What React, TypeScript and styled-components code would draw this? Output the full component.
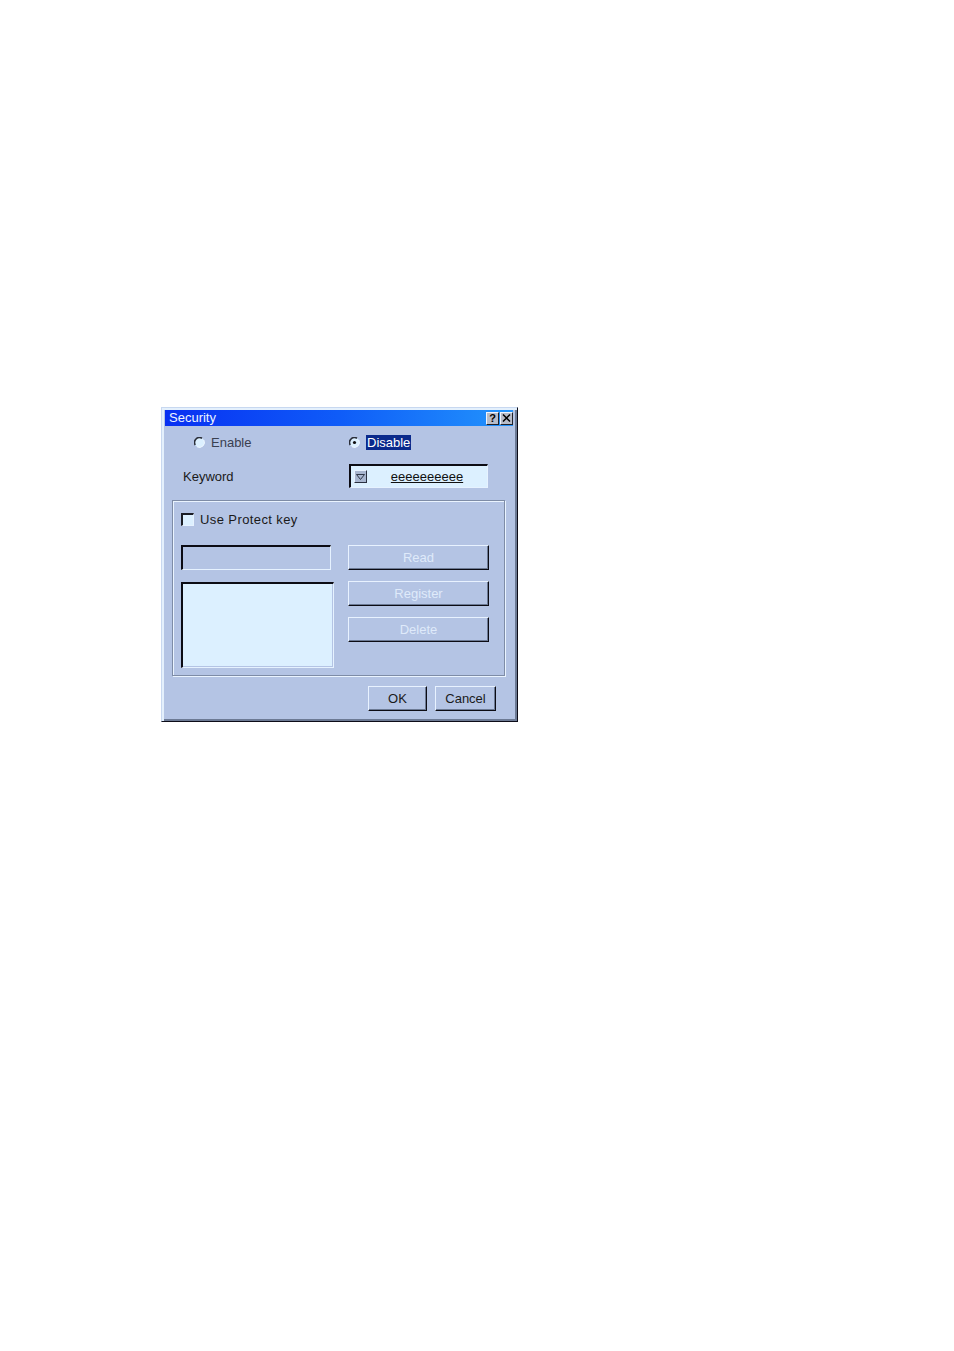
import styled, { createGlobalStyle } from "styled-components";

const GlobalStyle = createGlobalStyle`
  html, body {
    margin: 0;
    padding: 0;
    background: #ffffff;
  }
  body {
    font-family: "Liberation Sans", Arial, sans-serif;
  }
`;

const Page = styled.div`
  width: 954px;
  height: 1351px;
  padding: 407px 0 0 161px;
  box-sizing: border-box;
`;

const DialogFrame = styled.div`
  width: 357px;
  height: 315px;
  box-sizing: border-box;
  background: #b4c4e4;
  border-style: solid;
  border-width: 1px;
  border-color: #c8d8f0 #0c0c18 #0c0c18 #c8d8f0;
  box-shadow: inset 2px 2px #e4f0fc, inset -2px -2px #6c7a94;
  padding: 2px 4px 3px 3px;
  display: flex;
  flex-direction: column;
`;

const TitleBar = styled.div`
  height: 16px;
  display: flex;
  align-items: center;
  justify-content: space-between;
  background: linear-gradient(90deg, #0830f2 0%, #0f5cf8 50%, #2294fc 100%);
  padding: 0 0 0 4px;
`;

const TitleText = styled.span`
  color: #eef4ff;
  font-size: 13px;
  line-height: 16px;
`;

const TitleButtons = styled.div`
  display: flex;
  gap: 1px;
`;

const TitleButton = styled.div`
  width: 13px;
  height: 13px;
  box-sizing: border-box;
  background: #b8bcc8;
  border-style: solid;
  border-width: 1px;
  border-color: #f0f4fc #202028 #202028 #f0f4fc;
  display: flex;
  align-items: center;
  justify-content: center;
  font-size: 11px;
  font-weight: bold;
  color: #000;
  line-height: 1;
`;

const Body = styled.div`
  display: flex;
  flex-direction: column;
`;

const Row = styled.div<{ $left: number; $col: number; $top: number; $height: number }>`
  display: grid;
  grid-template-columns: ${(p) => p.$col}px auto;
  align-items: center;
  padding-left: ${(p) => p.$left}px;
  margin-top: ${(p) => p.$top}px;
  height: ${(p) => p.$height}px;
`;

const Option = styled.label`
  display: flex;
  align-items: center;
  gap: 6px;
  font-size: 13px;
  color: #3a4050;
`;

const Selected = styled.span`
  background: #0a2a8c;
  color: #ffffff;
  padding: 0 1px;
  line-height: 15px;
`;

const Label = styled.span`
  font-size: 13px;
  color: #1a1a1a;
`;

const KeywordField = styled.div`
  width: 139px;
  height: 24px;
  box-sizing: border-box;
  background: #dcf0ff;
  border-style: solid;
  border-width: 2px 1px 1px 2px;
  border-color: #0c0c14 #e6f2ff #e6f2ff #0c0c14;
  display: flex;
  align-items: center;
  padding-left: 3px;
`;

const DropButton = styled.div`
  width: 13px;
  height: 13px;
  box-sizing: border-box;
  background: #a8b6d0;
  border-style: solid;
  border-width: 1px;
  border-color: #e8f2ff #2a3040 #2a3040 #e8f2ff;
  display: flex;
  align-items: center;
  justify-content: center;
`;

const KeywordText = styled.span`
  flex: 1;
  text-align: center;
  font-size: 13px;
  color: #101010;
  text-decoration: underline;
`;

const Group = styled.div`
  margin: 12px 0 0 7px;
  width: 333px;
  height: 176px;
  box-sizing: border-box;
  border: 1px solid #7e8ca6;
  box-shadow: inset 1px 1px #eaf4ff, 1px 1px #eaf4ff;
  padding: 12px 0 0 8px;
`;

const CheckRow = styled.label`
  display: flex;
  align-items: center;
  gap: 6px;
  height: 13px;
  font-size: 13px;
  color: #1a1a1a;
  letter-spacing: 0.4px;
`;

const CheckBox = styled.span`
  width: 13px;
  height: 13px;
  box-sizing: border-box;
  background: #dcf0ff;
  border-style: solid;
  border-width: 2px 1px 1px 2px;
  border-color: #1a1c24 #e6f2ff #e6f2ff #1a1c24;
`;

const KeyGrid = styled.div`
  display: grid;
  grid-template-columns: 153px 141px;
  column-gap: 14px;
  margin-top: 19px;
`;

const LeftCol = styled.div`
  display: flex;
  flex-direction: column;
  gap: 12px;
`;

const RightCol = styled.div`
  display: flex;
  flex-direction: column;
  gap: 11px;
`;

const Sunken = styled.div<{ $w: number; $h: number; $fill: string }>`
  width: ${(p) => p.$w}px;
  height: ${(p) => p.$h}px;
  box-sizing: border-box;
  background: ${(p) => p.$fill};
  border-style: solid;
  border-width: 2px 1px 1px 2px;
  border-color: #0c0c14 #e6f2ff #e6f2ff #0c0c14;
  box-shadow: inset -1px -1px #b4c4e4;
`;

const Button = styled.button<{ $w: number; $disabled?: boolean }>`
  width: ${(p) => p.$w}px;
  height: 25px;
  box-sizing: border-box;
  background: #b4c4e4;
  border-style: solid;
  border-width: 1px;
  border-color: #e8f2ff #0c0c14 #0c0c14 #e8f2ff;
  box-shadow: inset -1px -1px #6c7a94;
  font-family: "Liberation Sans", Arial, sans-serif;
  font-size: 13px;
  color: ${(p) => (p.$disabled ? "#dfeafa" : "#1a1a1a")};
  padding: 0;
  cursor: default;
`;

const Footer = styled.div`
  display: flex;
  justify-content: flex-end;
  gap: 8px;
  margin-top: 10px;
  padding-right: 17px;
`;

function Radio({ checked }: { checked?: boolean }) {
  return (
    <svg width="11" height="11" viewBox="0 0 11 11">
      <circle cx="5.5" cy="5.5" r="5" fill="#dcf0ff" />
      <path d="M1.2 8 A5 5 0 0 1 8 1.2" stroke="#2a2e38" strokeWidth="1.6" fill="none" />
      <path d="M9.8 3 A5 5 0 0 1 3 9.8" stroke="#eef6ff" strokeWidth="1" fill="none" />
      {checked && <circle cx="5.5" cy="5.5" r="1.6" fill="#101010" />}
    </svg>
  );
}

export default function App() {
  return (
    <>
      <GlobalStyle />
      <Page>
        <DialogFrame>
          <TitleBar>
            <TitleText>Security</TitleText>
            <TitleButtons>
              <TitleButton>?</TitleButton>
              <TitleButton>
                <svg width="9" height="8" viewBox="0 0 9 8">
                  <path d="M1 0.5 L8 7.5 M8 0.5 L1 7.5" stroke="#000" strokeWidth="1.5" />
                </svg>
              </TitleButton>
            </TitleButtons>
          </TitleBar>
          <Body>
            <Row $left={29} $col={155} $top={8} $height={16}>
              <Option>
                <Radio />
                Enable
              </Option>
              <Option>
                <Radio checked />
                <Selected>Disable</Selected>
              </Option>
            </Row>
            <Row $left={18} $col={166} $top={14} $height={24}>
              <Label>Keyword</Label>
              <KeywordField>
                <DropButton>
                  <svg width="9" height="6" viewBox="0 0 9 6">
                    <path d="M0.5 0.5 H8.5 L4.5 5.5 Z" fill="none" stroke="#303848" strokeWidth="1" />
                  </svg>
                </DropButton>
                <KeywordText>eeeeeeeeee</KeywordText>
              </KeywordField>
            </Row>
            <Group>
              <CheckRow>
                <CheckBox />
                Use Protect key
              </CheckRow>
              <KeyGrid>
                <LeftCol>
                  <Sunken $w={150} $h={25} $fill="#b4c4e4" />
                  <Sunken $w={153} $h={86} $fill="#dcf0ff" />
                </LeftCol>
                <RightCol>
                  <Button $w={141} $disabled>Read</Button>
                  <Button $w={141} $disabled>Register</Button>
                  <Button $w={141} $disabled>Delete</Button>
                </RightCol>
              </KeyGrid>
            </Group>
            <Footer>
              <Button $w={59}>OK</Button>
              <Button $w={61}>Cancel</Button>
            </Footer>
          </Body>
        </DialogFrame>
      </Page>
    </>
  );
}
